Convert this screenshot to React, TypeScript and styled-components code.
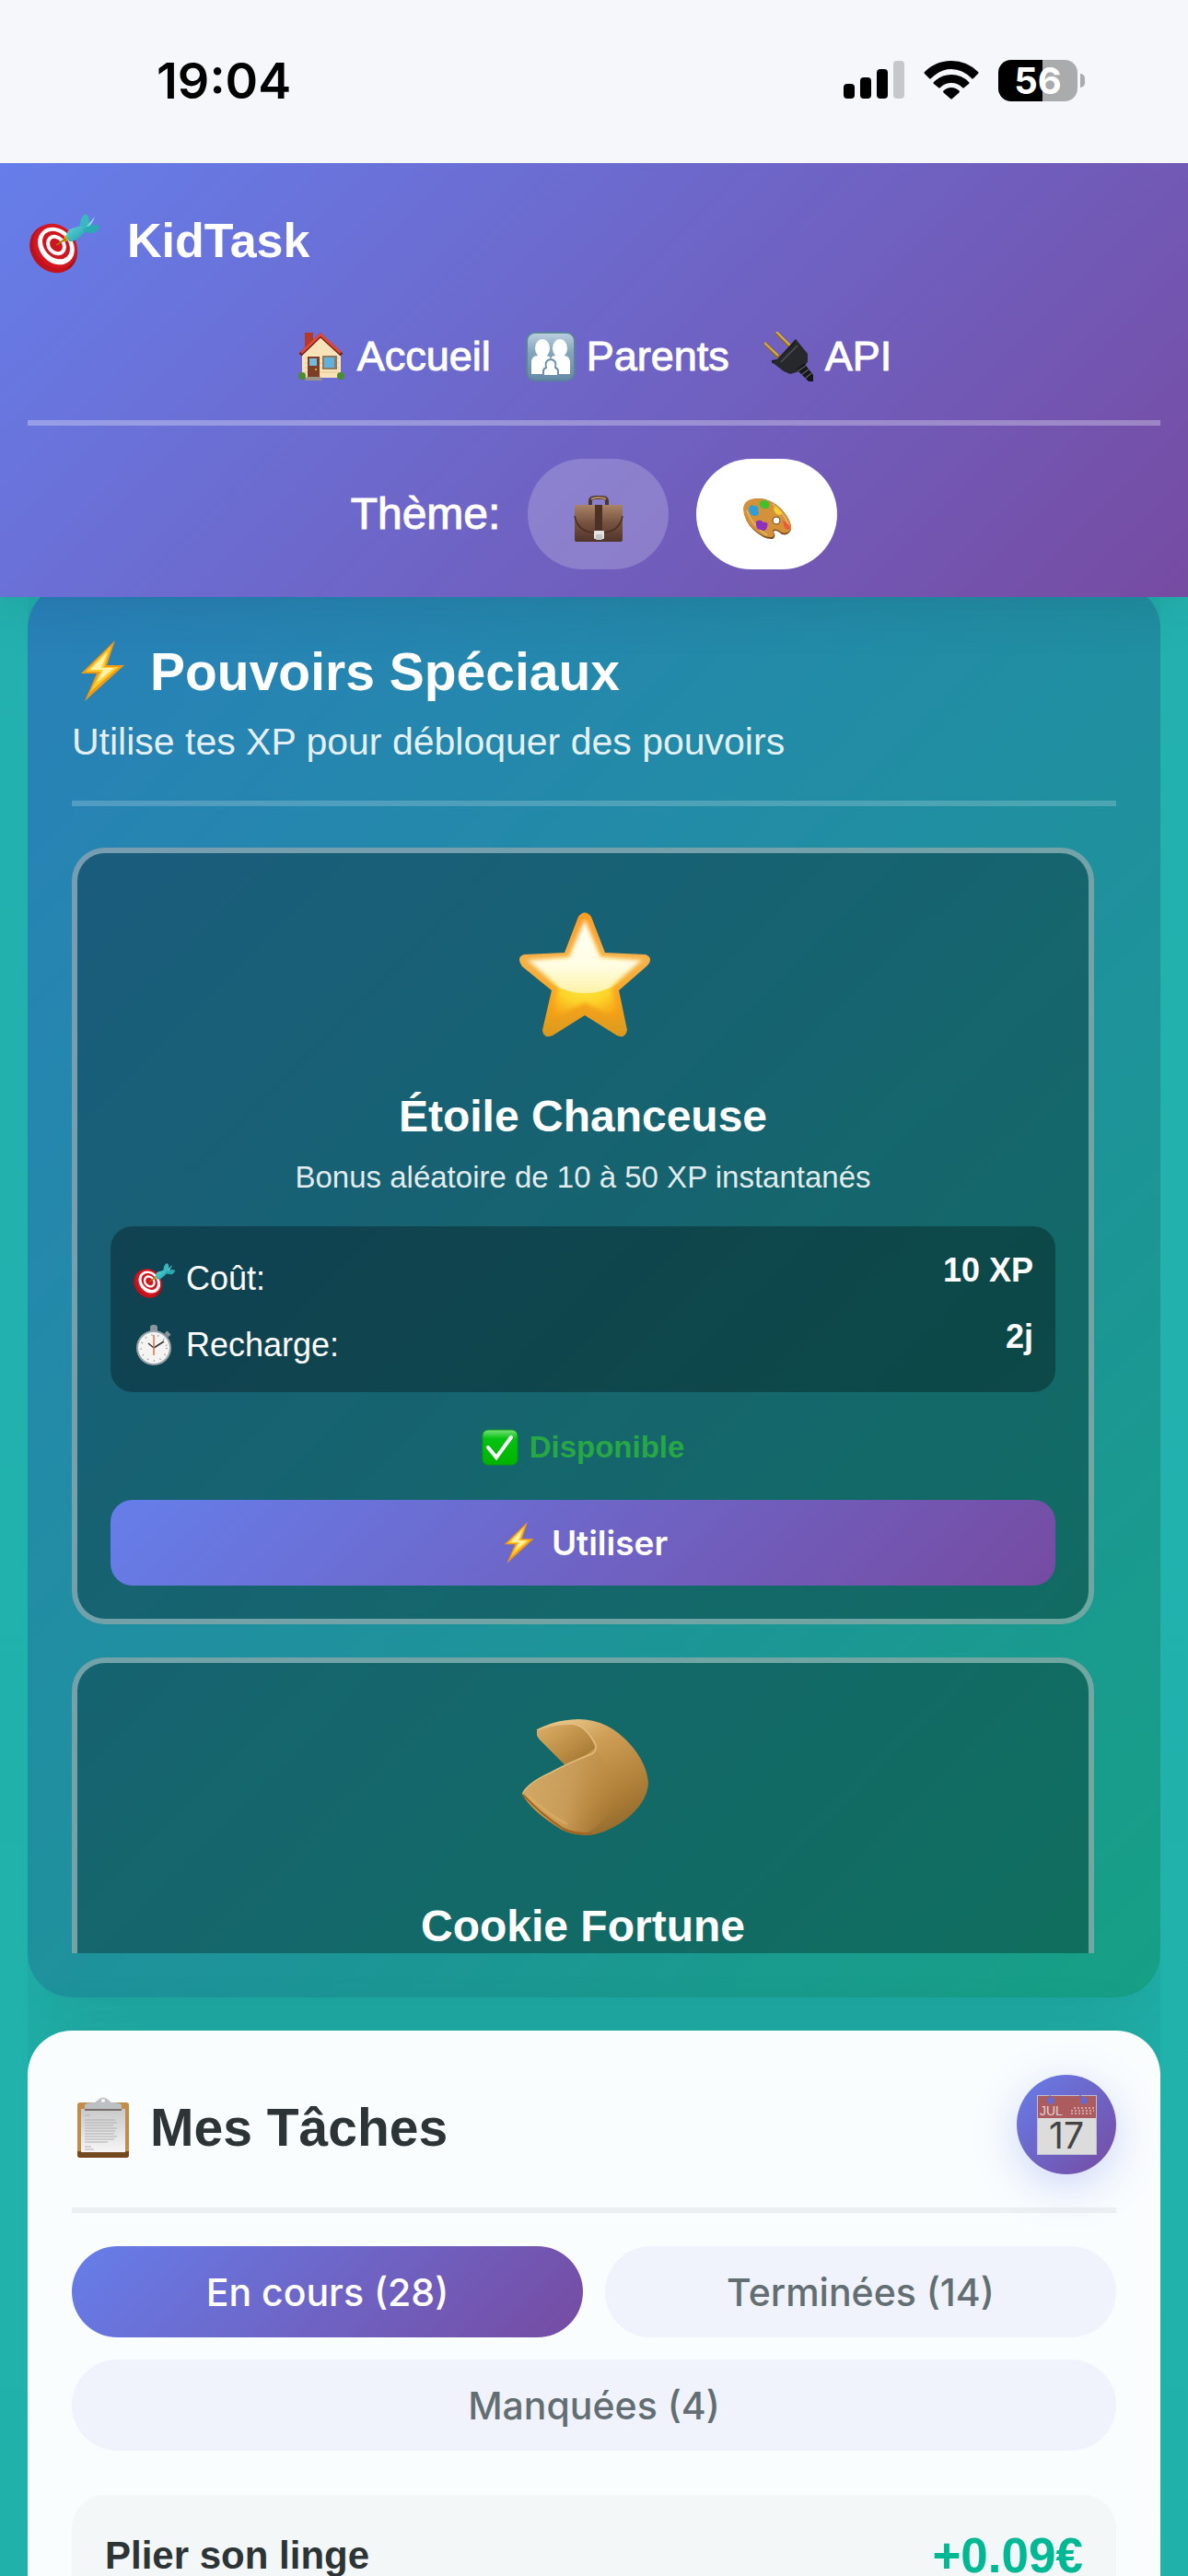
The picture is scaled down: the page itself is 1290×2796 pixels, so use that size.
import React, { useState } from 'react';
import styled, { createGlobalStyle, css } from 'styled-components';

const sans = `'Liberation Sans', Arial, sans-serif`;
const system = `Inter, 'Liberation Sans', sans-serif`;
const purple = 'linear-gradient(135deg, #667eea 0%, #764ba2 100%)';

const GlobalStyle = createGlobalStyle`
  * {
    box-sizing: border-box;
  }

  body {
    margin: 0;
    background: #20b2aa;
    font-family: ${sans};
  }

  h1, h2, h3, p, dl, dt, dd {
    margin: 0;
  }

  button {
    border: none;
    padding: 0;
    cursor: pointer;
  }
`;

/* ---------- Icons ---------- */

const TargetIcon: React.FC<{ size: number }> = ({ size }) => (
  <svg width={size} height={size} viewBox="0 0 78 78" aria-hidden="true">
    <defs>
      <linearGradient id="targetRim" x1="0" y1="0" x2="1" y2="1">
        <stop offset="0" stopColor="#b5101c" />
        <stop offset="0.6" stopColor="#c8131b" />
        <stop offset="1" stopColor="#7e0a10" />
      </linearGradient>
      <linearGradient id="dartBody" x1="0" y1="0" x2="1" y2="1">
        <stop offset="0" stopColor="#5fd8dc" />
        <stop offset="1" stopColor="#1d9ba6" />
      </linearGradient>
    </defs>
    <ellipse cx="28" cy="48" rx="24" ry="28" transform="rotate(-42 28 48)" fill="url(#targetRim)" />
    <ellipse cx="30" cy="45" rx="22" ry="26" transform="rotate(-42 30 45)" fill="#d3161f" />
    <ellipse cx="31" cy="45" rx="18" ry="22" transform="rotate(-42 31 45)" fill="#fff" />
    <ellipse cx="31" cy="44" rx="13" ry="17" transform="rotate(-42 31 44)" fill="#cf1620" />
    <ellipse cx="31" cy="44" rx="10" ry="12" transform="rotate(-42 31 44)" fill="#fff" />
    <ellipse cx="31" cy="44" rx="6" ry="8" transform="rotate(-42 31 44)" fill="#cf1620" />
    <path d="M38 40L41 33L46 39Z" fill="#e5b400" />
    <path d="M31 44L42 37" stroke="#a5720a" strokeWidth="2" />
    <path d="M42 35Q42 26 52 25L60 22L65 27L58 34Q51 41 45 40Z" fill="url(#dartBody)" />
    <path d="M57 24Q56 15 63 10Q67 12 67 20L64 26Z" fill="#38b8c0" />
    <path d="M64 24L73 13L71 18L67 24Z" fill="#8bdfe2" />
    <path d="M63 25Q70 20 78 23Q77 30 71 31Q64 31 60 28Z" fill="#2aabb4" />
  </svg>
);

const HouseIcon: React.FC = () => (
  <svg width="54" height="54" viewBox="0 0 54 54" aria-hidden="true">
    <rect x="9" y="1" width="9" height="17" fill="#b3392b" />
    <path d="M6 26L26 6L48 26V50H6Z" fill="#f8e3b8" />
    <path d="M9 29H46M9 34H46M9 39H46M9 44H46" stroke="#e2c691" strokeWidth="1" />
    <path d="M4 25L26 4L49 25" fill="none" stroke="#712019" strokeWidth="4" />
    <path d="M5 23L26 3L48 23" fill="none" stroke="#df4938" strokeWidth="3" />
    <rect x="12" y="27" width="13" height="23" fill="#7a3f26" />
    <rect x="14" y="29" width="8" height="8" fill="#75b9dd" />
    <rect x="28" y="26" width="16" height="15" fill="#8a7a66" />
    <rect x="30" y="28" width="11" height="11" fill="#62b0de" />
    <circle cx="21" cy="41" r="1" fill="#f5c542" />
    <circle cx="6" cy="48" r="4" fill="#4d8b31" />
    <circle cx="48" cy="48" r="4" fill="#4d8b31" />
    <path d="M11 49H26L28 53H9Z" fill="#9c9389" />
  </svg>
);

const FamilyIcon: React.FC = () => (
  <svg width="54" height="54" viewBox="0 0 54 54" aria-hidden="true">
    <defs>
      <linearGradient id="familyTile" x1="0" y1="0" x2="0" y2="1">
        <stop offset="0" stopColor="#bdd1df" />
        <stop offset="0.4" stopColor="#86a5bb" />
        <stop offset="1" stopColor="#648aa6" />
      </linearGradient>
    </defs>
    <rect x="1" y="1" width="52" height="52" rx="9" fill="url(#familyTile)" stroke="#5c819d" strokeWidth="2" />
    <g fill="#fff">
      <ellipse cx="18" cy="18" rx="8" ry="10" />
      <ellipse cx="37" cy="18" rx="8" ry="10" />
      <path d="M6 46V34Q6 26 13 26H22Q26 26 27 30Q28 26 32 26H41Q48 26 48 34V46Z" />
    </g>
    <path d="M19 48V43Q19 40 22 39Q20 31 27 30Q34 31 32 39Q35 40 35 43V48Z" fill="#fff" stroke="#6c90aa" strokeWidth="2" />
  </svg>
);

const PlugIcon: React.FC = () => (
  <svg width="54" height="54" viewBox="0 0 54 54" aria-hidden="true">
    <path d="M13 1L29 17M0 12L16 28" stroke="#8a6a25" strokeWidth="4" />
    <path d="M13 0L28 15M0 12L15 26" stroke="#d9ae4c" strokeWidth="2" />
    <path d="M34 8L37 14V20L20 36L8 34L8 31L14 30Z" fill="#1d1e20" />
    <path d="M34 8L47 24V33L38 43L28 46L21 43L8 33L14 31L33 13Z" fill="#27282b" />
    <path d="M36 15L18 33" stroke="#505255" strokeWidth="1.5" />
    <path d="M35 41L43 34L53 47V54H48Z" fill="#161618" />
    <path d="M36 43L45 37M40 47L48 41M44 51L51 45" stroke="#58595c" strokeWidth="1.5" />
  </svg>
);

const BriefcaseIcon: React.FC = () => (
  <svg width="54" height="50" viewBox="0 0 54 50" aria-hidden="true">
    <defs>
      <linearGradient id="leather" x1="0" y1="0" x2="0" y2="1">
        <stop offset="0" stopColor="#a98468" />
        <stop offset="0.5" stopColor="#76513f" />
        <stop offset="1" stopColor="#51332a" />
      </linearGradient>
    </defs>
    <path d="M18 11V6Q18 2 23 2H31Q36 2 36 6V11" fill="none" stroke="#49372d" strokeWidth="4" />
    <path d="M19 4Q21 2 27 2Q33 2 35 4" fill="none" stroke="#b58b62" strokeWidth="2" />
    <rect x="1" y="10" width="52" height="40" rx="2" fill="url(#leather)" />
    <path d="M1 22Q4 38 20 40H34Q50 38 53 22" fill="none" stroke="#4b2f26" strokeWidth="1.5" />
    <rect x="23" y="10" width="8" height="28" fill="#4d3026" />
    <rect x="22" y="38" width="11" height="9" rx="1" fill="#e4e4e4" />
    <rect x="24" y="42" width="7" height="6" rx="1" fill="#c4c5c6" />
  </svg>
);

const PaletteIcon: React.FC = () => (
  <svg width="54" height="46" viewBox="0 0 54 46" aria-hidden="true">
    <path d="M2 14Q2 2 17 1Q31 1 43 13Q54 26 53 35Q50 42 43 40Q36 34 34 37Q37 43 33 45Q24 46 12 35Q2 25 2 14Z" fill="#7c491b" />
    <path d="M1 12Q2 1 17 1Q31 1 43 13Q54 25 53 34Q50 40 43 38Q35 32 33 36Q36 42 32 43Q23 44 12 34Q1 23 1 12Z" fill="#d3923a" />
    <path d="M5 14Q10 30 27 41M33 7Q45 17 50 29" fill="none" stroke="#e8b768" strokeWidth="1.5" />
    <circle cx="37" cy="25" r="4" fill="#fff" stroke="#7c491b" strokeWidth="1" />
    <path d="M7 11Q9 7 13 9Q19 9 17 14Q20 19 14 20Q7 20 7 11Z" fill="#2e9fd8" />
    <path d="M19 5Q25 0 29 6Q31 13 24 12Q18 11 19 5Z" fill="#3fc12e" />
    <path d="M34 11Q38 9 40 13Q46 17 41 19Q34 18 34 11Z" fill="#f4cf36" />
    <path d="M44 25Q49 27 52 33Q51 37 46 33Z" fill="#f0563f" />
    <path d="M15 26Q20 23 23 27Q29 26 27 32Q25 38 20 35Q14 35 15 26Z" fill="#8f2fc0" />
  </svg>
);

const BoltIcon: React.FC<{ size: number }> = ({ size }) => (
  <svg width={size} height={size} viewBox="0 0 68 68" aria-hidden="true">
    <path d="M47 0L10 36H27L14 66L57 27H38Z" fill="#f39a13" />
    <path d="M43 6L15 34H31L20 56L51 29H35Z" fill="#ffcb2f" />
    <path d="M39 12L20 32H34L27 46L46 30H32Z" fill="#fff3a8" />
  </svg>
);

const StarIcon: React.FC = () => (
  <svg width="148" height="136" viewBox="-4 0 148 136" aria-hidden="true">
    <defs>
      <linearGradient id="starBody" x1="0" y1="0" x2="0" y2="1">
        <stop offset="0" stopColor="#ff9c1f" />
        <stop offset="0.4" stopColor="#f5b24a" />
        <stop offset="0.7" stopColor="#fba41b" />
        <stop offset="1" stopColor="#d99a1e" />
      </linearGradient>
      <radialGradient id="starGlow" cx="0.5" cy="0.55" r="0.5">
        <stop offset="0" stopColor="#fff04a" />
        <stop offset="0.55" stopColor="#fcd42a" />
        <stop offset="1" stopColor="#f79a13" />
      </radialGradient>
      <linearGradient id="starShine" x1="0" y1="0" x2="0" y2="1">
        <stop offset="0" stopColor="#fffff6" />
        <stop offset="0.6" stopColor="#fffde2" />
        <stop offset="1" stopColor="#fdf0a0" />
      </linearGradient>
      <filter id="starSoft" x="-10%" y="-10%" width="120%" height="120%">
        <feGaussianBlur stdDeviation="2" />
      </filter>
      <clipPath id="starTop">
        <path d="M0 0H144V60L108 78Q90 88 72 88Q54 88 36 78L0 60Z" />
      </clipPath>
    </defs>
    <path d="M65 5Q72 -4 79 5L94 44L138 46Q147 50 140 58L109 85L118 128Q116 138 107 134L72 112L37 134Q27 138 26 128L36 85L4 59Q-3 49 6 46L50 44Z" fill="url(#starBody)" />
    <path d="M72 14L88 50L130 52L101 82L108 116L72 98L36 116L43 82L14 52L56 50Z" fill="url(#starGlow)" filter="url(#starSoft)" />
    <g clipPath="url(#starTop)">
      <path d="M72 8L89 49L134 52L102 80L100 92H44L42 80L10 52L55 49Z" fill="url(#starShine)" filter="url(#starSoft)" />
    </g>
  </svg>
);

const CookieIcon: React.FC = () => (
  <svg width="142" height="144" viewBox="-4 0 142 144" aria-hidden="true">
    <defs>
      <linearGradient id="cookieBody" x1="0.2" y1="0" x2="0.8" y2="1">
        <stop offset="0" stopColor="#eecf95" />
        <stop offset="0.3" stopColor="#cf9f57" />
        <stop offset="0.7" stopColor="#b28139" />
        <stop offset="1" stopColor="#8d672b" />
      </linearGradient>
      <linearGradient id="cookieFold" x1="0" y1="0" x2="1" y2="1">
        <stop offset="0" stopColor="#dcb06a" />
        <stop offset="0.6" stopColor="#b98a40" />
        <stop offset="1" stopColor="#996f2d" />
      </linearGradient>
      <linearGradient id="cookieFront" x1="0" y1="0.4" x2="1" y2="0.6">
        <stop offset="0" stopColor="#d3a866" />
        <stop offset="0.5" stopColor="#c89c58" />
        <stop offset="1" stopColor="#b58239" stopOpacity="0" />
      </linearGradient>
    </defs>
    <path d="M17 14Q32 2 62 1Q94 1 118 28Q136 48 138 70Q137 92 112 111Q90 126 72 127Q52 128 36 116Q10 99 1 82Q4 72 48 51L22 25Q16 20 17 14Z" fill="url(#cookieBody)" />
    <path d="M17 14Q32 6 56 7Q72 9 80 31Q80 36 48 51L22 25Q16 20 17 14Z" fill="url(#cookieFold)" />
    <path d="M1 82Q10 70 48 52Q78 40 80 33Q104 60 104 84Q96 112 68 126Q52 126 36 115Q8 96 1 82Z" fill="url(#cookieFront)" />
    <path d="M17 13Q36 3 56 6Q70 8 81 29Q82 36 76 39Q50 49 32 59Q8 70 2 81" fill="none" stroke="#e3bd7d" strokeWidth="1.5" />
    <path d="M2 83Q22 105 46 120Q58 126 76 125" fill="none" stroke="#a3631b" strokeWidth="2" />
    <path d="M6 83Q28 104 50 115" fill="none" stroke="#dfb062" strokeWidth="3" opacity="0.6" />
  </svg>
);

const StopwatchIcon: React.FC = () => (
  <svg width="46" height="46" viewBox="-1 0 46 46" aria-hidden="true">
    <rect x="18" y="1" width="8" height="8" rx="3" fill="#8a949c" />
    <path d="M35 9L39 13" stroke="#8a949c" strokeWidth="4" />
    <circle cx="22" cy="26" r="19" fill="#98a2a9" />
    <circle cx="22" cy="26" r="17" fill="#f4f4f2" />
    <circle cx="22" cy="26" r="14" fill="none" stroke="#9a9a9a" strokeWidth="2" strokeDasharray="1 6" />
    <path d="M22 26L33 19M22 26L16 21" stroke="#333" strokeWidth="1.5" />
    <path d="M22 12V34" stroke="#e0714d" strokeWidth="1.5" />
  </svg>
);

const CheckIcon: React.FC = () => (
  <svg width="40" height="40" viewBox="0 0 40 40" aria-hidden="true">
    <defs>
      <linearGradient id="checkTile" x1="0" y1="0" x2="0" y2="1">
        <stop offset="0" stopColor="#7be07b" />
        <stop offset="0.25" stopColor="#05c312" />
        <stop offset="1" stopColor="#00b300" />
      </linearGradient>
    </defs>
    <rect x="1" y="1" width="38" height="38" rx="6" fill="url(#checkTile)" stroke="#0a9a17" strokeWidth="1" />
    <path d="M7 20L16 31L32 9" fill="none" stroke="#fff" strokeWidth="4" strokeLinecap="round" />
  </svg>
);

const ClipboardIcon: React.FC = () => (
  <svg width="68" height="68" viewBox="0 0 68 68" aria-hidden="true">
    <defs>
      <linearGradient id="sheet" x1="0" y1="0" x2="0" y2="1">
        <stop offset="0" stopColor="#c9c9c9" />
        <stop offset="1" stopColor="#f6f6f6" />
      </linearGradient>
    </defs>
    <rect x="6" y="7" width="56" height="60" rx="3" fill="#c08d4a" />
    <path d="M6 60H62V64Q62 67 59 67H9Q6 67 6 64Z" fill="#74491f" />
    <rect x="10" y="14" width="48" height="47" fill="url(#sheet)" />
    <path d="M14 21H20M14 26H47M14 29H49M14 32H45M14 35H49M14 38H47M14 41H46M14 44H49M14 47H46M14 50H39M14 55H21M14 58H24" stroke="#b0b0b0" strokeWidth="1" />
    <path d="M14 15V10Q15 7 25 7L30 3Q34 0 38 3L43 7Q53 7 54 10V15Z" fill="#bcc0c2" />
    <path d="M14 14H54V16H14Z" fill="#77706a" />
    <circle cx="34" cy="5" r="2" fill="#fafdfe" />
  </svg>
);

const CalendarIcon: React.FC = () => (
  <svg width="65" height="65" viewBox="0 0 65 65" overflow="visible" aria-hidden="true">
    <rect x="0" y="0" width="65" height="65" fill="#bfbfd1" />
    <rect x="1" y="25" width="63" height="39" fill="#dcdcdc" />
    <rect x="1" y="1" width="63" height="24" fill="#ac5c5e" />
    <path d="M13 1L17 5M46 1L51 5" stroke="#7f5f94" strokeWidth="3" />
    <circle cx="15" cy="6" r="4" fill="#6b69cb" />
    <circle cx="51" cy="6" r="4" fill="#6b69cb" />
    <path d="M40 14H62M37 17H62M37 20H59" stroke="#d6a4a5" strokeWidth="2" strokeDasharray="2 2" />
    <text x="3" y="22" fontFamily="Liberation Sans, sans-serif" fontSize="14" fill="#e8d3d4">JUL</text>
    <text x="32" y="58" textAnchor="middle" fontFamily="Inter, sans-serif" fontSize="39" fill="#444">17</text>
  </svg>
);

const SignalIcon: React.FC = () => (
  <svg width="66" height="42" viewBox="0 0 66 42" aria-label="Réseau">
    <rect x="0" y="25" width="12" height="16" rx="4" />
    <rect x="18" y="18" width="12" height="23" rx="4" />
    <rect x="36" y="9" width="12" height="32" rx="4" />
    <rect x="54" y="0" width="12" height="41" rx="4" fill="#c5c7ca" />
  </svg>
);

const WifiIcon: React.FC = () => (
  <svg width="60" height="42" viewBox="0 0 60 42" aria-label="Wi-Fi">
    <path d="M1 12Q13 0 30 0Q47 0 59 12Q60 13 59 14L54 19Q53 20 52 19Q42 9 30 9Q18 9 8 19Q7 20 6 19L1 14Q0 13 1 12Z" />
    <path d="M11 23Q19 15 30 15Q41 15 49 23Q50 24 49 25L44 29Q43 30 42 29Q37 24 30 24Q23 24 18 29Q17 30 16 29L11 25Q10 24 11 23Z" />
    <path d="M21 33Q25 29 30 29Q35 29 39 33Q39 34 38 35L31 41Q30 42 29 41L22 35Q21 34 21 33Z" />
  </svg>
);

/* ---------- Status bar ---------- */

const StatusBar = styled.div`
  position: relative;
  z-index: 2;
  display: flex;
  flex: none;
  align-items: center;
  justify-content: space-between;
  height: 177px;
  padding: 0 112px 3px 170px;
  background: #f5f7fb;
  color: #000;
  font-family: ${system};
`;

const Clock = styled.time`
  font-size: 54px;
  font-weight: 600;
`;

const StatusIcons = styled.div`
  display: flex;
  align-items: center;
  gap: 21px;
`;

const Battery = styled.div`
  display: flex;
  align-items: center;
  gap: 3px;

  &::after {
    content: '';
    width: 5px;
    height: 15px;
    border-radius: 0 6px 6px 0;
    background: #aaabad;
  }
`;

const BatteryLevel = styled.span`
  width: 86px;
  border-radius: 14px;
  background: linear-gradient(90deg, #000 56%, #aaabad 56%);
  color: #fff;
  font-size: 40px;
  font-weight: 700;
  line-height: 45px;
  text-align: center;
`;

/* ---------- Header ---------- */

const Header = styled.header`
  position: relative;
  z-index: 1;
  flex: none;
  padding: 30px;
  background: ${purple};
  box-shadow: 0 6px 60px rgba(0, 0, 0, 0.1);
  color: #fff;
`;

const Brand = styled.div`
  display: flex;
  align-items: center;
  gap: 30px;
  height: 108px;
`;

const BrandName = styled.h1`
  font-size: 52px;
  line-height: 60px;
`;

const Nav = styled.nav`
  display: flex;
  align-items: center;
  justify-content: center;
  gap: 38px;
  padding: 33px 0 30px;
  border-bottom: 6px solid rgba(255, 255, 255, 0.3);
`;

const NavLink = styled.a`
  display: flex;
  align-items: center;
  gap: 12px;
  color: #fff;
  font-size: 45px;
  line-height: 78px;
  text-decoration: none;
  -webkit-text-stroke: 1px currentColor;
`;

const ThemePicker = styled.div`
  display: flex;
  align-items: center;
  justify-content: center;
  gap: 30px;
  padding-top: 36px;
`;

const ThemeLabel = styled.span`
  font-size: 48px;
  line-height: 60px;
  -webkit-text-stroke: 1px currentColor;
`;

const ThemeButton = styled.button<{ $active: boolean }>`
  display: flex;
  align-items: center;
  justify-content: center;
  width: 153px;
  height: 120px;
  padding-top: 10px;
  border-radius: 60px;
  background: ${props => props.$active ? '#fff' : 'rgba(255, 255, 255, 0.2)'};
`;

/* ---------- Page ---------- */

const Shell = styled.div`
  display: flex;
  flex-direction: column;
  height: 100vh;
  overflow: hidden;
  background: linear-gradient(180deg, #24b0b0 0%, #20b2aa 100%);
`;

const Main = styled.main`
  display: flex;
  flex: 1;
  flex-direction: column;
  gap: 36px;
  min-height: 0;
  margin: -14px 30px 0;
  overflow: hidden;
`;

const panel = css`
  flex: none;
  padding: 48px;
  border-radius: 48px;
  box-shadow: 0 24px 96px rgba(0, 0, 0, 0.1);
`;

const PowersPanel = styled.section`
  ${panel}
  background: linear-gradient(135deg, #2980b9 0%, #16a085 100%);
  color: #fff;
`;

const TasksPanel = styled.section`
  ${panel}
  background: #fafdfe;
`;

const PanelTitle = styled.h2`
  display: flex;
  align-items: center;
  gap: 17px;
  font-size: 57px;
  font-kerning: none;
  line-height: 94px;
`;

const PowersHeader = styled.div`
  padding-bottom: 35px;
  border-bottom: 6px solid rgba(255, 255, 255, 0.2);
`;

const Subtitle = styled.p`
  color: rgba(255, 255, 255, 0.9);
  font-size: 41px;
  line-height: 58px;
`;

const PowerList = styled.div`
  display: flex;
  flex-direction: column;
  gap: 36px;
  height: 1200px;
  margin-top: 45px;
  padding-right: 24px;
  overflow: hidden;
`;

const PowerCard = styled.article`
  display: flex;
  flex: none;
  flex-direction: column;
  padding: 36px;
  border: 6px solid rgba(255, 255, 255, 0.4);
  border-radius: 36px;
  background: rgba(0, 0, 0, 0.3);
  text-align: center;
`;

const PowerIcon = styled.div`
  display: flex;
  align-items: center;
  justify-content: center;
  height: 192px;
  margin-bottom: 28px;
`;

const PowerName = styled.h3`
  font-size: 48px;
  line-height: 60px;
`;

const PowerText = styled.p`
  margin: 10px 0 27px;
  color: rgba(255, 255, 255, 0.9);
  font-size: 33px;
  line-height: 52px;
`;

const PowerStats = styled.dl`
  display: flex;
  flex-direction: column;
  gap: 6px;
  padding: 24px 24px 18px;
  border-radius: 24px;
  background: rgba(0, 0, 0, 0.3);
`;

const Stat = styled.div`
  display: flex;
  align-items: flex-start;
  justify-content: space-between;
  font-size: 36px;
`;

const StatLabel = styled.dt`
  display: flex;
  align-items: center;
  gap: 12px;
  line-height: 66px;
`;

const StatValue = styled.dd`
  font-weight: 700;
  line-height: 48px;
`;

const Availability = styled.p`
  display: flex;
  align-items: center;
  justify-content: center;
  gap: 12px;
  margin: 30px 0 27px;
  color: #28a745;
  font-size: 33px;
  font-weight: 700;
  line-height: 60px;
`;

const UseButton = styled.button`
  display: flex;
  align-items: center;
  justify-content: center;
  gap: 12px;
  height: 93px;
  border-radius: 24px;
  background: ${purple};
  color: #fff;
  font-family: ${system};
  font-size: 37px;
  font-weight: 600;
`;

const TasksHeader = styled.div`
  display: flex;
  align-items: flex-start;
  justify-content: space-between;
  padding-bottom: 30px;
  border-bottom: 6px solid #edf0f2;
  color: #2d3436;

  ${PanelTitle} {
    line-height: 114px;
  }
`;

const CalendarButton = styled.button`
  display: flex;
  align-items: center;
  justify-content: center;
  width: 108px;
  height: 108px;
  border-radius: 50%;
  background: ${purple};
  box-shadow: 0 12px 48px rgba(102, 126, 234, 0.3);
`;

const Tabs = styled.div`
  display: grid;
  grid-template-columns: 1fr 1fr;
  gap: 24px;
  margin: 36px 0 48px;
`;

const Tab = styled.button<{ $active: boolean }>`
  height: 99px;
  border-radius: 50px;
  background: ${props => props.$active ? purple : '#f0f3fc'};
  color: ${props => props.$active ? '#fff' : '#636e72'};
  font-family: ${system};
  font-size: 41px;
  font-weight: 500;

  &:last-child {
    grid-column: 1 / -1;
  }
`;

const TaskCard = styled.article`
  display: flex;
  align-items: center;
  justify-content: space-between;
  padding: 36px;
  border-radius: 36px;
  background: #f4f7f8;
`;

const TaskName = styled.h3`
  color: #2d3436;
  font-size: 42px;
  line-height: 60px;
`;

const Reward = styled.strong`
  color: #00b894;
  font-size: 53px;
  line-height: 60px;
`;

interface Power {
  name: string;
  text: string;
  cost: string;
  cooldown: string;
  icon: React.ReactNode;
}

const powers: Power[] = [
  {
    name: 'Étoile Chanceuse',
    text: 'Bonus aléatoire de 10 à 50 XP instantanés',
    cost: '10 XP',
    cooldown: '2j',
    icon: <StarIcon />,
  },
];

const tabs = ['En cours (28)', 'Terminées (14)', 'Manquées (4)'];

const App: React.FC = () => {
  const [theme, setTheme] = useState('fun');
  const [tab, setTab] = useState(tabs[0]);

  return (
    <Shell>
      <GlobalStyle />
      <StatusBar>
        <Clock>19:04</Clock>
        <StatusIcons>
          <SignalIcon />
          <WifiIcon />
          <Battery>
            <BatteryLevel>56</BatteryLevel>
          </Battery>
        </StatusIcons>
      </StatusBar>

      <Header>
        <Brand>
          <TargetIcon size={78} />
          <BrandName>KidTask</BrandName>
        </Brand>
        <Nav>
          <NavLink href="#accueil"><HouseIcon />Accueil</NavLink>
          <NavLink href="#parents"><FamilyIcon />Parents</NavLink>
          <NavLink href="#api"><PlugIcon />API</NavLink>
        </Nav>
        <ThemePicker role="group" aria-labelledby="theme-label">
          <ThemeLabel id="theme-label">Thème:</ThemeLabel>
          <ThemeButton $active={theme === 'pro'} aria-label="Professionnel" onClick={() => setTheme('pro')}>
            <BriefcaseIcon />
          </ThemeButton>
          <ThemeButton $active={theme === 'fun'} aria-label="Coloré" onClick={() => setTheme('fun')}>
            <PaletteIcon />
          </ThemeButton>
        </ThemePicker>
      </Header>

      <Main>
        <PowersPanel>
          <PowersHeader>
            <PanelTitle><BoltIcon size={68} />Pouvoirs Spéciaux</PanelTitle>
            <Subtitle>Utilise tes XP pour débloquer des pouvoirs</Subtitle>
          </PowersHeader>
          <PowerList>
            {powers.map(power => (
              <PowerCard key={power.name}>
                <PowerIcon>{power.icon}</PowerIcon>
                <PowerName>{power.name}</PowerName>
                <PowerText>{power.text}</PowerText>
                <PowerStats>
                  <Stat>
                    <StatLabel><TargetIcon size={46} />Coût:</StatLabel>
                    <StatValue>{power.cost}</StatValue>
                  </Stat>
                  <Stat>
                    <StatLabel><StopwatchIcon />Recharge:</StatLabel>
                    <StatValue>{power.cooldown}</StatValue>
                  </Stat>
                </PowerStats>
                <Availability><CheckIcon />Disponible</Availability>
                <UseButton><BoltIcon size={46} />Utiliser</UseButton>
              </PowerCard>
            ))}
            <PowerCard>
              <PowerIcon><CookieIcon /></PowerIcon>
              <PowerName>Cookie Fortune</PowerName>
            </PowerCard>
          </PowerList>
        </PowersPanel>

        <TasksPanel>
          <TasksHeader>
            <PanelTitle><ClipboardIcon />Mes Tâches</PanelTitle>
            <CalendarButton aria-label="Calendrier">
              <CalendarIcon />
            </CalendarButton>
          </TasksHeader>
          <Tabs>
            {tabs.map(name => (
              <Tab key={name} $active={name === tab} onClick={() => setTab(name)}>{name}</Tab>
            ))}
          </Tabs>
          <TaskCard>
            <TaskName>Plier son linge</TaskName>
            <Reward>+0.09€</Reward>
          </TaskCard>
        </TasksPanel>
      </Main>
    </Shell>
  );
};

export default App;
